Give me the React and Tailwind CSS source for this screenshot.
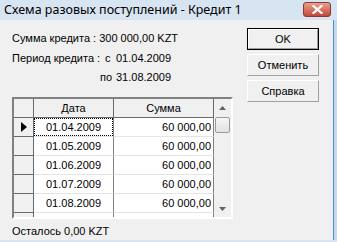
import React from "react";

const rows = [
  { d: "01.04.2009", s: "60 000,00" },
  { d: "01.05.2009", s: "60 000,00" },
  { d: "01.06.2009", s: "60 000,00" },
  { d: "01.07.2009", s: "60 000,00" },
  { d: "01.08.2009", s: "60 000,00" },
  { d: "", s: "0,00" },
];

function Btn({ children, def }) {
  return (
    <div className={"w-[72px] h-[22px] " + (def ? "border border-[#000]" : "")}>
      <div className="w-full h-full border-t border-l border-t-white border-l-white border-b border-r border-b-[#a0a0a0] border-r-[#a0a0a0] bg-[#f0f0f0] flex items-center justify-center text-[11px] text-black">
        {children}
      </div>
    </div>
  );
}

export default function App() {
  return (
    <div className="w-[337px] h-[242px] bg-[#d7e4f2] flex flex-col overflow-hidden" style={{ fontFamily: '"Liberation Sans", Arial, sans-serif' }}>
      {/* title */}
      <div className="h-[20px] flex items-center justify-between pl-[4px] pr-[6px]">
        <span className="text-[12.5px] text-black leading-none" style={{ fontFamily: '"Noto Sans", "Open Sans", sans-serif' }}>
          Схема разовых поступлений - Кредит 1
        </span>
        <div className="w-[28px] h-[15px] mt-[-2px] rounded-[3px] border border-[#8a3a30] bg-gradient-to-b from-[#e8a090] to-[#c0463a] flex items-center justify-center">
          <svg width="11" height="9" viewBox="0 0 11 9">
            <path d="M1.5 1 L9.5 8 M9.5 1 L1.5 8" stroke="#fff" strokeWidth="2.2" strokeLinecap="square" />
          </svg>
        </div>
      </div>
      <div className="flex flex-1">
        {/* client */}
        <div className="w-[333px] h-[220px] bg-[#f0f0f0] flex text-[11px] text-black">
          <div className="pl-[12px] pt-[8px] flex flex-col">
            <div className="h-[20px] flex items-center">Сумма кредита : 300 000,00 KZT</div>
            <div className="h-[20px] flex items-center">
              <span className="w-[93px]">Период кредита :</span>
              <span className="w-[11px]">с</span>
              <span>01.04.2009</span>
            </div>
            <div className="h-[19px] flex items-center">
              <span className="w-[88px]"></span>
              <span className="w-[16px]">по</span>
              <span>31.08.2009</span>
            </div>
            {/* grid */}
            <div className="mt-[10px] w-[221px] h-[122px] border-t-2 border-l-2 border-t-[#808080] border-l-[#808080] border-b-2 border-r-2 border-b-white border-r-white flex">
              <div className="flex flex-col w-[200px] h-[118px] overflow-hidden bg-white">
                {/* header */}
                <div className="flex h-[19px] shrink-0 bg-[#f0f0f0] border-b border-[#696969]">
                  <div className="w-[20px] border-r border-[#696969]"></div>
                  <div className="w-[80px] border-r border-[#696969] flex items-center justify-center">Дата</div>
                  <div className="w-[100px] border-r border-[#696969] flex items-center justify-center">Сумма</div>
                </div>
                {rows.map((r, i) => (
                  <div key={i} className="flex h-[19px] shrink-0">
                    <div className="w-[20px] bg-[#f0f0f0] border-r border-b border-[#696969] flex items-center justify-center">
                      {i === 0 && (
                        <svg width="6" height="10" viewBox="0 0 6 10">
                          <path d="M0 0 L6 5 L0 10 Z" fill="#000" />
                        </svg>
                      )}
                    </div>
                    <div className="w-[80px] border-r border-b border-r-[#808080] border-b-[#e4e4e4] flex items-center justify-center relative">
                      {i === 0 && <div className="absolute inset-0 border border-dotted border-black"></div>}
                      <span className="relative">{r.d}</span>
                    </div>
                    <div className={"w-[100px] border-r border-b border-r-[#808080] border-b-[#e4e4e4] flex justify-end pr-[2px] " + (r.d ? "items-center" : "items-start pt-[2px]")}>
                      {r.s}
                    </div>
                  </div>
                ))}
              </div>
              {/* scrollbar */}
              <div className="w-[17px] h-[118px] bg-[#f0f0f0] flex flex-col items-center">
                <div className="h-[17px] w-full flex items-center justify-center">
                  <svg width="7" height="4" viewBox="0 0 7 4"><path d="M3.5 0 L7 4 L0 4 Z" fill="#606060" /></svg>
                </div>
                <div className="w-[15px] h-[16px] mt-[1px] rounded-[2px] border border-[#9a9a9a] bg-gradient-to-b from-[#f6f6f6] to-[#e2e2e2]"></div>
                <div className="flex-1"></div>
                <div className="h-[17px] w-full flex items-center justify-center">
                  <svg width="7" height="4" viewBox="0 0 7 4"><path d="M0 0 L7 0 L3.5 4 Z" fill="#606060" /></svg>
                </div>
              </div>
            </div>
            <div className="mt-[5px] h-[14px] flex items-center">Осталось 0,00 KZT</div>
          </div>
          <div className="ml-auto mr-[14px] pt-[8px] flex flex-col gap-[4px]">
            <Btn def>OK</Btn>
            <Btn>Отменить</Btn>
            <Btn>Справка</Btn>
          </div>
        </div>
        <div className="w-[4px] h-[220px] border-l border-[#3c96d8] bg-[#c8d8e8]"></div>
      </div>
    </div>
  );
}
